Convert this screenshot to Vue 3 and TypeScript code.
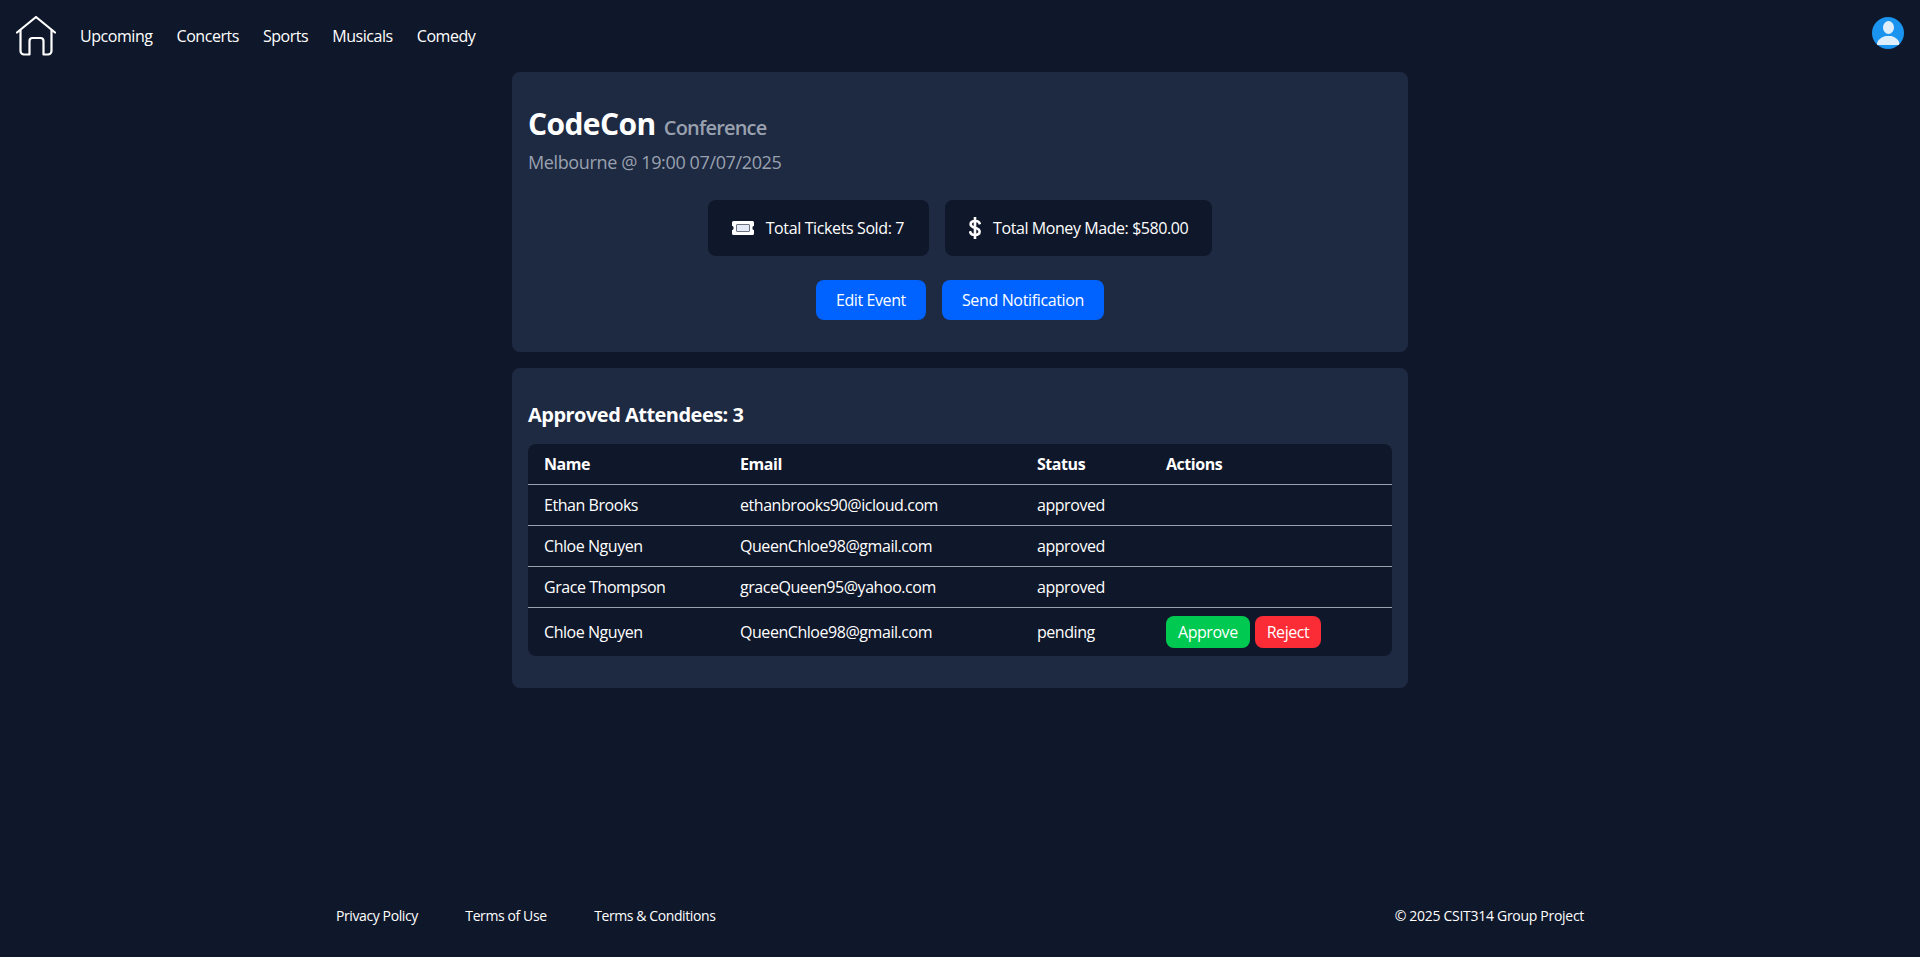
<script setup lang="ts">
type Attendee = { name: string; email: string; status: 'approved' | 'pending' };

const navLinks = ['Upcoming', 'Concerts', 'Sports', 'Musicals', 'Comedy'];
const footerLinks = ['Privacy Policy', 'Terms of Use', 'Terms & Conditions'];

const attendees: Attendee[] = [
  { name: 'Ethan Brooks', email: 'ethanbrooks90@icloud.com', status: 'approved' },
  { name: 'Chloe Nguyen', email: 'QueenChloe98@gmail.com', status: 'approved' },
  { name: 'Grace Thompson', email: 'graceQueen95@yahoo.com', status: 'approved' },
  { name: 'Chloe Nguyen', email: 'QueenChloe98@gmail.com', status: 'pending' },
];

const approvedCount = attendees.filter((a) => a.status === 'approved').length;
</script>

<template>
  <div class="page">
    <header class="topbar">
      <nav class="nav">
        <a class="home" href="#" aria-label="Home">
          <svg viewBox="0 0 40 40" width="40" height="40" fill="none" stroke="#fff" stroke-width="2.2" stroke-linejoin="round" stroke-linecap="round">
            <path d="M1 16.500 20 1l19 15.500" />
            <path d="M4.500 14v21a3.500 3.500 0 0 0 3.500 3.500h5.500V25a3 3 0 0 1 3-3h8a3 3 0 0 1 3 3v13.500H32a3.500 3.500 0 0 0 3.500-3.500V14" />
          </svg>
        </a>
        <a v-for="link in navLinks" :key="link" class="nav-link" href="#">{{ link }}</a>
      </nav>
      <svg class="avatar" viewBox="0 0 32 32" width="32" height="32">
        <defs>
          <clipPath id="avatar-clip"><circle cx="16" cy="16" r="16" /></clipPath>
        </defs>
        <circle cx="16" cy="16" r="16" fill="#1a94ee" />
        <g clip-path="url(#avatar-clip)" fill="#deeefb">
          <ellipse cx="16.500" cy="10.500" rx="5.500" ry="6.500" />
          <path d="M5 28c0-5 3-7 8.500-9h6c5 2 8 4 8 9z" />
        </g>
      </svg>
    </header>

    <main class="main">
      <section class="card event-card">
        <h1 class="title">CodeCon <span class="category">Conference</span></h1>
        <p class="subtitle">Melbourne @ 19:00 07/07/2025</p>

        <div class="stats">
          <div class="stat ticket-stat">
            <svg class="stat-icon" viewBox="0 0 22 14" width="22" height="14">
              <path fill="#fff" d="M1.500 0h19A1.500 1.500 0 0 1 22 1.500v3.300a2.300 2.300 0 0 0 0 4.400v3.300a1.500 1.500 0 0 1-1.500 1.500h-19A1.500 1.500 0 0 1 0 12.500V9.200a2.300 2.300 0 0 0 0-4.400V1.500A1.500 1.500 0 0 1 1.500 0z" />
              <rect x="4.500" y="3.500" width="13" height="7" rx="0.500" fill="#e6ebf5" stroke="#6b7280" />
            </svg>
            <span>Total Tickets Sold: 7</span>
          </div>
          <div class="stat money-stat">
            <svg class="stat-icon" viewBox="0 0 12 22" width="12" height="22" fill="none" stroke="#fff" stroke-width="2.600" stroke-linecap="square">
              <path d="M6 1v20" />
              <path d="M10.500 6.200C10 4.700 8.500 4 6.200 4 3.500 4 1.600 5.200 1.600 7.300c0 4.600 9 2.500 9 7.300 0 2.100-2 3.400-4.600 3.400-2.500 0-4.200-.9-4.700-2.600" />
            </svg>
            <span>Total Money Made: $580.00</span>
          </div>
        </div>

        <div class="event-actions">
          <button class="btn btn-edit" type="button">Edit Event</button>
          <button class="btn btn-send" type="button">Send Notification</button>
        </div>
      </section>

      <section class="card attendees-card">
        <h2 class="attendees-title">Approved Attendees: {{ approvedCount }}</h2>
        <div class="table-wrap">
          <table class="table">
            <colgroup>
              <col class="col-name" />
              <col class="col-email" />
              <col class="col-status" />
              <col />
            </colgroup>
            <thead>
              <tr>
                <th>Name</th>
                <th>Email</th>
                <th>Status</th>
                <th>Actions</th>
              </tr>
            </thead>
            <tbody>
              <tr v-for="(a, i) in attendees" :key="i">
                <td>{{ a.name }}</td>
                <td>{{ a.email }}</td>
                <td>{{ a.status }}</td>
                <td>
                  <div v-if="a.status === 'pending'" class="row-actions">
                    <button class="pill approve" type="button">Approve</button>
                    <button class="pill reject" type="button">Reject</button>
                  </div>
                </td>
              </tr>
            </tbody>
          </table>
        </div>
      </section>
    </main>

    <footer class="footer">
      <div class="footer-links">
        <a v-for="link in footerLinks" :key="link" href="#">{{ link }}</a>
      </div>
      <span class="copyright">© 2025 CSIT314 Group Project</span>
    </footer>
  </div>
</template>

<style>
html,
body {
  margin: 0;
  background: #0f172a;
}
</style>

<style scoped>
.page {
  display: flex;
  flex-direction: column;
  min-height: 957px;
  box-sizing: border-box;
  background: #0f172a;
  color: #fff;
  font-family: 'Open Sans', 'Noto Sans', sans-serif;
  font-size: 16px;
  line-height: 24px;
  letter-spacing: -0.45px;
}

.topbar {
  display: flex;
  align-items: flex-start;
  justify-content: space-between;
  height: 72px;
  padding: 16px 16px 0;
  box-sizing: border-box;
}

.nav {
  display: flex;
  align-items: center;
  gap: 24px;
  height: 40px;
}

.home {
  display: block;
  width: 40px;
  height: 40px;
}

.home svg,
.avatar {
  display: block;
}

.nav-link {
  color: #fff;
  text-decoration: none;
}

.avatar {
  margin-top: 1px;
}

.main {
  display: flex;
  flex-direction: column;
  gap: 16px;
  width: 896px;
  margin: 0 auto;
}

.card {
  background: #1e2942;
  border-radius: 8px;
  padding: 16px;
}

.event-card {
  height: 280px;
  box-sizing: border-box;
  padding-top: 34px;
}

.title {
  margin: 0;
  font-size: 30px;
  line-height: 36px;
  font-weight: 700;
  letter-spacing: -0.6px;
}

.category {
  margin-left: 1px;
  color: #99a1af;
  font-size: 20px;
  line-height: 20px;
  font-weight: 600;
  letter-spacing: -0.8px;
}

.subtitle {
  margin: 6px 0 0;
  color: #99a1af;
  font-size: 18px;
  line-height: 28px;
  letter-spacing: -0.37px;
}

.stats {
  display: flex;
  justify-content: center;
  gap: 16px;
  margin-top: 24px;
}

.stat {
  display: flex;
  align-items: center;
  gap: 12px;
  height: 56px;
  padding: 0 24px;
  background: #0f172a;
  border-radius: 8px;
}

.ticket-stat {
  padding-right: 25px;
  letter-spacing: -0.38px;
}

.money-stat {
  letter-spacing: -0.42px;
}

.stat-icon {
  display: block;
  flex: none;
}

.event-actions {
  display: flex;
  justify-content: center;
  gap: 16px;
  margin-top: 24px;
}

.btn {
  height: 40px;
  padding: 0 20px;
  border: 0;
  border-radius: 8px;
  background: #0062ff;
  color: #fff;
  font: inherit;
  letter-spacing: inherit;
}

.btn-edit {
  letter-spacing: -0.4px;
}

.btn-send {
  letter-spacing: -0.35px;
}

.attendees-card {
  height: 320px;
  box-sizing: border-box;
  padding-top: 33px;
}

.attendees-title {
  margin: 0;
  font-size: 20px;
  line-height: 28px;
  font-weight: 700;
  letter-spacing: -0.52px;
}

.table-wrap {
  margin-top: 15px;
  background: #0f172a;
  border-radius: 8px;
  overflow: hidden;
}

.table {
  width: 100%;
  table-layout: fixed;
  border-collapse: collapse;
}

.col-name {
  width: 196px;
}

.col-email {
  width: 297px;
}

.col-status {
  width: 129px;
}

th,
td {
  padding: 8px 16px;
  text-align: left;
}

th {
  font-weight: 700;
}

thead tr,
tbody tr:not(:last-child) {
  border-bottom: 1px solid #99a1af;
}

.row-actions {
  display: flex;
  gap: 5px;
}

.pill {
  height: 32px;
  padding: 0 12px;
  border: 0;
  border-radius: 8px;
  color: #fff;
  font: inherit;
  letter-spacing: inherit;
}

.approve {
  background: #00c951;
}

.reject {
  background: #fb2c36;
}

.footer {
  display: flex;
  align-items: center;
  justify-content: space-between;
  width: 1248px;
  margin: auto auto 31px;
  font-size: 14px;
  line-height: 20px;
  letter-spacing: -0.4px;
}

.footer-links {
  display: flex;
  gap: 47.5px;
}

.footer-links a {
  color: #fff;
  text-decoration: none;
}

.copyright {
  letter-spacing: -0.29px;
}
</style>
